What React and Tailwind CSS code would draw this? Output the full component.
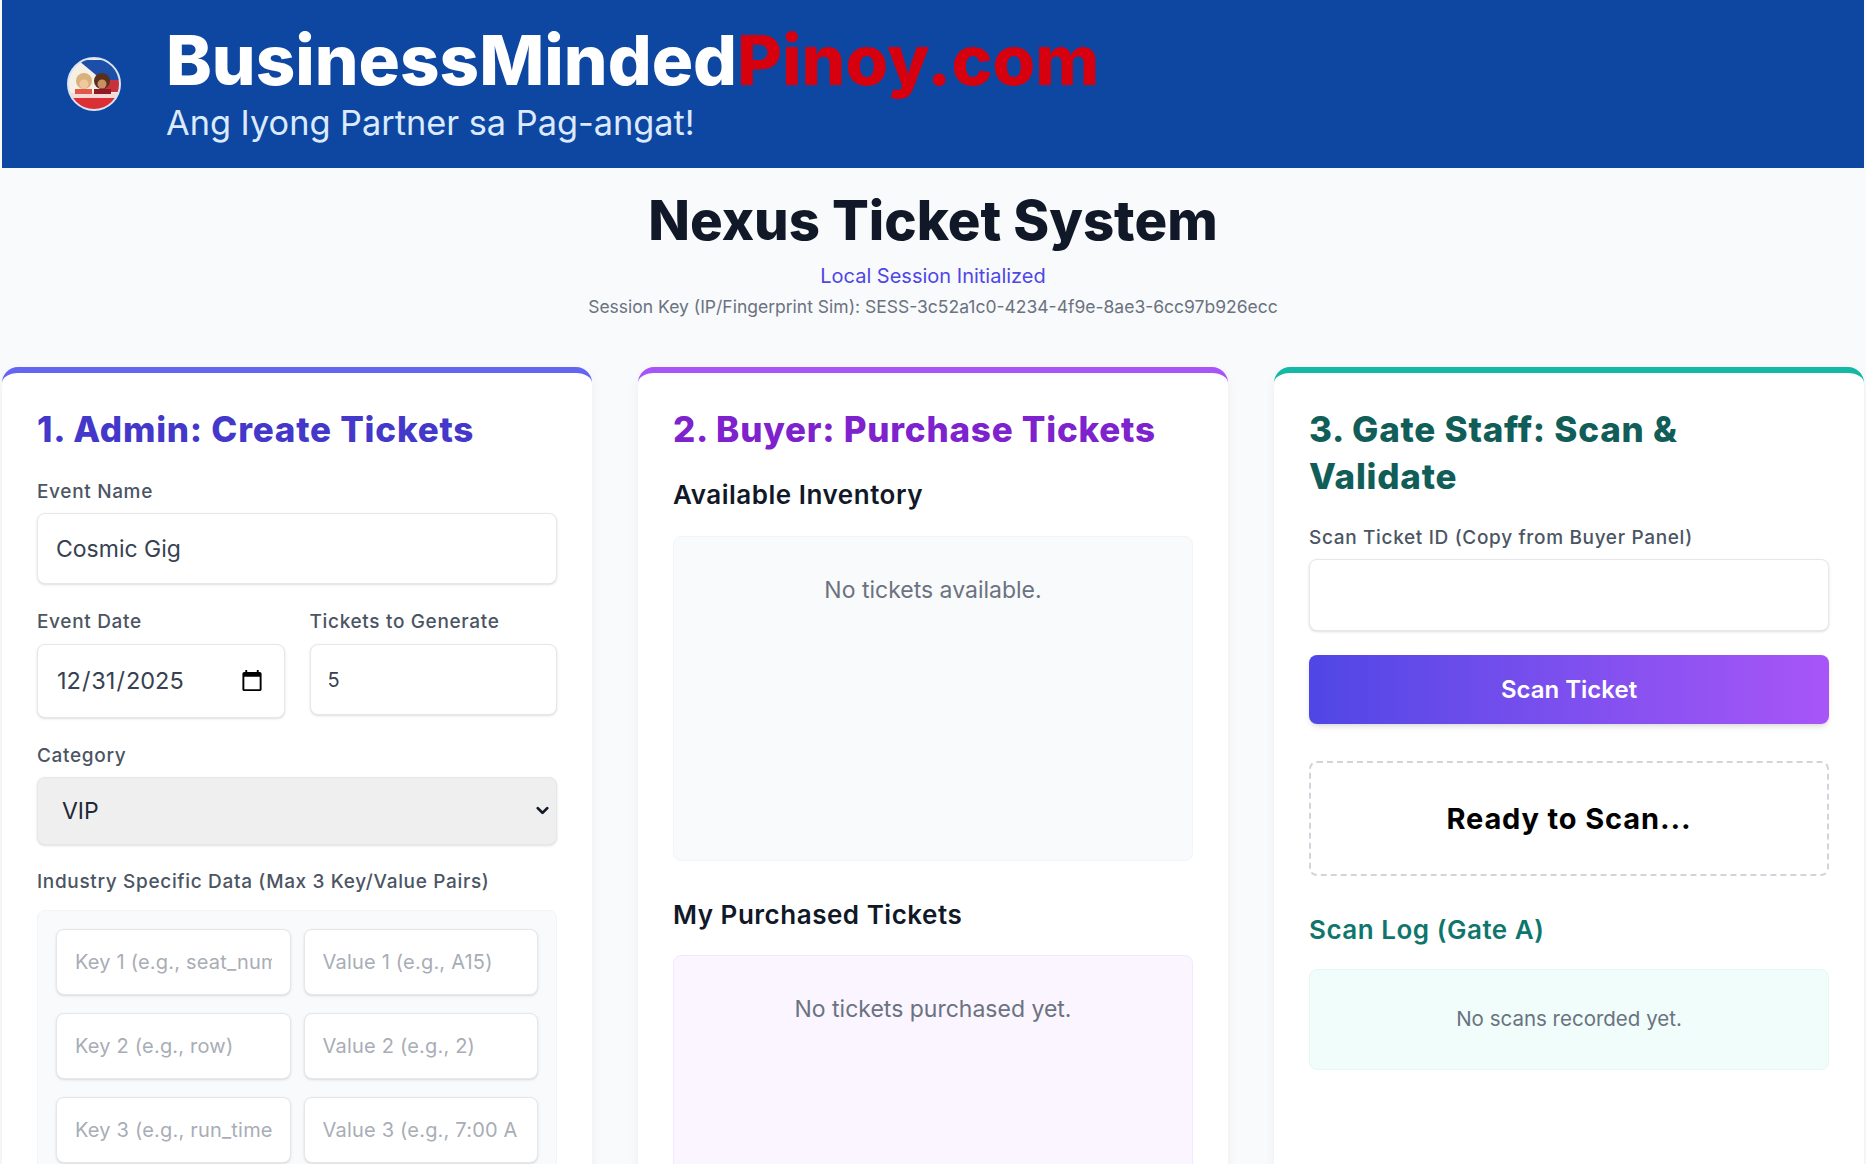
import React from 'react';
import { ChevronDown } from 'lucide-react';

const inputBase = 'block w-full rounded-lg border border-[#e5e7eb] bg-white text-[#374151] shadow-sm outline-none';
const labelBase = 'block text-[19px] leading-[22px] tracking-[0.035em] font-medium text-[#4b5563]';
const h2Base = 'text-[35px] leading-[47px] tracking-[0.022em] font-extrabold';
const h3Base = 'text-[26px] leading-[32px] tracking-[0.02em] font-semibold';

// logo drawn small, the original is a round photo badge
const Logo = () => (
  <svg viewBox="0 0 56 56" className="w-[56px] h-[56px] shrink-0 blur-[0.7px]">
    <defs>
      <clipPath id="badge">
        <circle cx="28" cy="28" r="26" />
      </clipPath>
    </defs>
    <g clipPath="url(#badge)">
      <rect width="56" height="56" fill="#f5efe6" />
      <polygon points="12,4 56,4 56,24 36,24" fill="#1c4fa8" />
      <rect y="24" x="34" width="22" height="12" fill="#c8323c" />
      <rect y="37" width="56" height="5" fill="#f7d9d6" />
      <rect y="42" width="56" height="14" fill="#d92f35" />
      <circle cx="18" cy="25" r="8" fill="#d8b27a" />
      <circle cx="36" cy="25" r="8" fill="#5a2f1c" />
      <circle cx="36" cy="28" r="4.5" fill="#c98f63" />
      <circle cx="18" cy="28" r="4.5" fill="#eec9a0" />
      <rect x="9" y="33" width="17" height="5" fill="#e2574c" />
      <rect x="28" y="33" width="17" height="5" fill="#8f1a24" />
    </g>
    <circle cx="28" cy="28" r="26" fill="none" stroke="#dbe4f2" strokeWidth="2" />
  </svg>
);

const Field = ({ label, className, children }) => (
  <div className={className}>
    <label className={labelBase}>{label}</label>
    {children}
  </div>
);

const KeyInput = ({ placeholder }) => (
  <input
    placeholder={placeholder}
    className="block w-full min-w-0 h-[66px] rounded-lg border border-[#e5e7eb] bg-white px-[18px] text-[20px] tracking-[0.01em] shadow-sm outline-none placeholder:text-[#a8adb6]"
  />
);

const Card = ({ border, children }) => (
  <section className={`h-[900px] min-w-0 rounded-[16px] border-t-[6px] bg-white px-[35px] pt-[33px] shadow-[0_4px_12px_rgba(0,0,0,0.05)] ${border}`}>
    {children}
  </section>
);

const AdminPanel = () => (
  <Card border="border-[#6366f1]">
    <h2 className={`${h2Base} text-[#4338ca]`}>1. Admin: Create Tickets</h2>
    <Field label="Event Name" className="mt-[28px]">
      <input defaultValue="Cosmic Gig" className={`${inputBase} mt-[10px] h-[71px] px-[18px] text-[23px]`} />
    </Field>
    <div className="mt-[27px] grid grid-cols-2 gap-x-[25px] items-start">
      <Field label="Event Date">
        <input type="date" defaultValue="2025-12-31" className={`${inputBase} mt-[11px] h-[74px] px-[18px] text-[23.5px]`} />
      </Field>
      <Field label="Tickets to Generate">
        <input type="number" defaultValue="5" className={`${inputBase} mt-[11px] h-[71px] px-[17px] text-[20px]`} />
      </Field>
    </div>
    <Field label="Category" className="mt-[27px]">
      <div className="relative mt-[10px]">
        <select className="block h-[68px] w-full appearance-none rounded-lg border border-[#e5e7eb] bg-[#efefef] px-[24px] text-[23px] text-[#1f2937] shadow-sm outline-none">
          <option>VIP</option>
        </select>
        <ChevronDown className="pointer-events-none absolute right-[5px] top-[24px] h-[19px] w-[19px] text-[#111827]" strokeWidth={3.5} />
      </div>
    </Field>
    <Field label="Industry Specific Data (Max 3 Key/Value Pairs)" className="mt-[26px]">
      <div className="mt-[17px] rounded-lg border border-[#f1f5f9] bg-[#f9fafb] p-[18px]">
        <div className="grid grid-cols-2 gap-x-[13px] gap-y-[18px]">
          <KeyInput placeholder="Key 1 (e.g., seat_number)" />
          <KeyInput placeholder="Value 1 (e.g., A15)" />
          <KeyInput placeholder="Key 2 (e.g., row)" />
          <KeyInput placeholder="Value 2 (e.g., 2)" />
          <KeyInput placeholder="Key 3 (e.g., run_time)" />
          <KeyInput placeholder="Value 3 (e.g., 7:00 AM)" />
        </div>
      </div>
    </Field>
  </Card>
);

const BuyerPanel = () => (
  <Card border="border-[#a855f7]">
    <h2 className={`${h2Base} text-[#7e22ce]`}>2. Buyer: Purchase Tickets</h2>
    <h3 className={`${h3Base} mt-[26px] text-[#111827]`}>Available Inventory</h3>
    <div className="mt-[25px] h-[325px] rounded-lg border border-[#f1f5f9] bg-[#f9fafb] pt-[39px] text-center text-[23px] leading-[28px] text-[#6b7280]">
      No tickets available.
    </div>
    <h3 className={`${h3Base} mt-[38px] text-[#111827]`}>My Purchased Tickets</h3>
    <div className="mt-[24px] h-[325px] rounded-lg border border-[#f3e8ff] bg-[#faf5ff] pt-[39px] text-center text-[23px] leading-[28px] text-[#6b7280]">
      No tickets purchased yet.
    </div>
  </Card>
);

const GatePanel = () => (
  <Card border="border-[#14b8a6]">
    <h2 className={`${h2Base} text-[#115e59]`}>3. Gate Staff: Scan &amp; Validate</h2>
    <Field label="Scan Ticket ID (Copy from Buyer Panel)" className="mt-[27px]">
      <input className={`${inputBase} mt-[10px] h-[72px] px-[18px] text-[23px]`} />
    </Field>
    <button className="mt-[24px] block h-[69px] w-full rounded-lg bg-gradient-to-r from-[#4f46e5] to-[#a855f7] text-[24px] font-semibold text-white shadow-md">
      Scan Ticket
    </button>
    <div className="mt-[37px] flex h-[115px] items-center justify-center rounded-lg border-2 border-dashed border-[#d1d5db] text-[29px] tracking-[0.03em] font-bold text-black">
      Ready to Scan...
    </div>
    <h3 className={`${h3Base} mt-[38px] text-[#0f766e]`}>Scan Log (Gate A)</h3>
    <div className="mt-[23px] flex h-[101px] items-center justify-center rounded-lg border border-[#e6f7f4] bg-[#f0fdfa] text-[20.5px] text-[#6b7280]">
      No scans recorded yet.
    </div>
  </Card>
);

export default function App() {
  return (
    <div className="h-screen overflow-hidden bg-[#f8fafc] font-['Inter',sans-serif]">
      {/* header */}
      <header className="mx-[2px] flex h-[168px] items-center gap-[44px] bg-[#0e47a1] pl-[64px]">
        <Logo />
        <div className="pb-[2px]">
          <h1 className="text-[69px] leading-[80px] font-extrabold text-white">
            BusinessMinded<span className="text-[#d6000f]">Pinoy.com</span>
          </h1>
          <p className="text-[34.3px] leading-[46px] text-[#dbeafe]">Ang Iyong Partner sa Pag-angat!</p>
        </div>
      </header>

      {/* title */}
      <div className="pt-[22px] text-center">
        <h1 className="text-[54.5px] leading-[60px] font-extrabold text-[#111827]">Nexus Ticket System</h1>
        <p className="mt-[12px] text-[20px] leading-[28px] text-[#4f46e5]">Local Session Initialized</p>
        <p className="mt-[5px] text-[17.5px] leading-[24px] text-[#6b7280]">
          Session Key (IP/Fingerprint Sim): SESS-3c52a1c0-4234-4f9e-8ae3-6cc97b926ecc
        </p>
      </div>

      {/* panels */}
      <main className="mt-[48px] grid grid-cols-3 gap-x-[46px] px-[2px]">
        <AdminPanel />
        <BuyerPanel />
        <GatePanel />
      </main>
    </div>
  );
}
